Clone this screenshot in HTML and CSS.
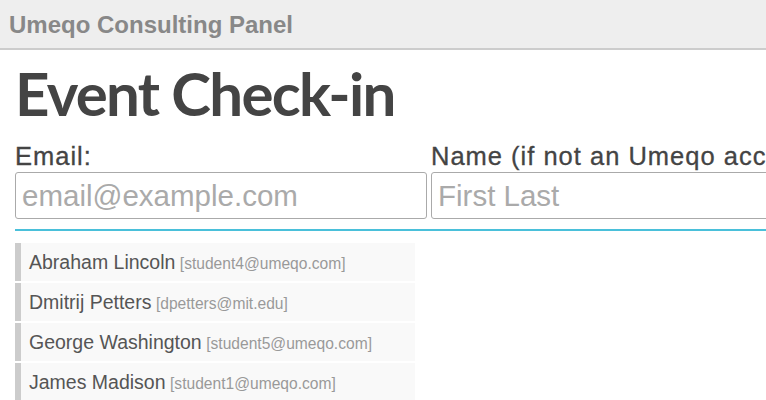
FILE: index.html
```html
<!DOCTYPE html>
<html>
<head>
<meta charset="utf-8">
<link rel="stylesheet" href="styles.css">
</head>
<body>
<div class="topbar"><span class="brand">Umeqo Consulting Panel</span></div>
<main class="content">
  <h1 class="title">Event Check-in</h1>
  <form class="checkin">
    <div class="field">
      <label class="label">Email:</label>
      <input class="input" type="text" placeholder="email@example.com">
    </div>
    <div class="field">
      <label class="label">Name (if not an Umeqo account holder):</label>
      <input class="input" type="text" placeholder="First Last">
    </div>
  </form>
  <ul class="attendees">
    <li class="attendee"><span class="name">Abraham Lincoln</span> <span class="mail">[student4@umeqo.com]</span></li>
    <li class="attendee"><span class="name">Dmitrij Petters</span> <span class="mail">[dpetters@mit.edu]</span></li>
    <li class="attendee"><span class="name">George Washington</span> <span class="mail">[student5@umeqo.com]</span></li>
    <li class="attendee"><span class="name">James Madison</span> <span class="mail">[student1@umeqo.com]</span></li>
  </ul>
</main>
</body>
</html>
```
FILE: styles.css
```css
html, body {
  margin: 0;
  padding: 0;
  overflow: hidden;
  background: #fff;
  font-family: "Liberation Sans", Arial, sans-serif;
}

.topbar {
  height: 48px;
  background: #eeeeee;
  border-bottom: 2px solid #cccccc;
  display: flex;
  align-items: center;
  padding-left: 9px;
}

.brand {
  font-size: 24px;
  font-weight: bold;
  color: #888888;
  line-height: 1;
  margin-top: 1px;
}

.content {
  padding-left: 15px;
}

.title {
  font-family: Lato, sans-serif;
  font-weight: bold;
  font-size: 60px;
  letter-spacing: -1.7px;
  line-height: 70px;
  color: #444444;
  margin: 8px 0 0 0;
}

.checkin {
  display: flex;
  gap: 4px;
  width: 1000px;
  border-bottom: 2px solid #4ac0da;
  padding-bottom: 10px;
  margin-top: 13px;
}

.field {
  display: flex;
  flex-direction: column;
  width: 412px;
  flex: none;
}

.label {
  font-size: 25.5px;
  letter-spacing: 1px;
  color: #444444;
  line-height: 31px;
  white-space: nowrap;
  -webkit-text-stroke: 0.3px #444444;
}

.input {
  box-sizing: border-box;
  width: 412px;
  height: 47px;
  margin: 0;
  border: 1px solid #aaaaaa;
  border-radius: 3px;
  padding: 0 6px;
  font-family: "Liberation Sans", Arial, sans-serif;
  font-size: 29.5px;
  color: #444;
  outline: none;
}

.input::placeholder {
  color: #aaaaaa;
}

.attendees {
  list-style: none;
  margin: 12px 0 0 0;
  padding: 0;
  width: 400px;
}

.attendee {
  box-sizing: border-box;
  height: 38px;
  line-height: 38px;
  margin-bottom: 2px;
  background: #f9f9f9;
  border-left: 6px solid #cccccc;
  padding-left: 8px;
  white-space: nowrap;
}

.name {
  font-size: 19.5px;
  color: #555555;
}

.mail {
  font-size: 15.6px;
  color: #999999;
}
```
